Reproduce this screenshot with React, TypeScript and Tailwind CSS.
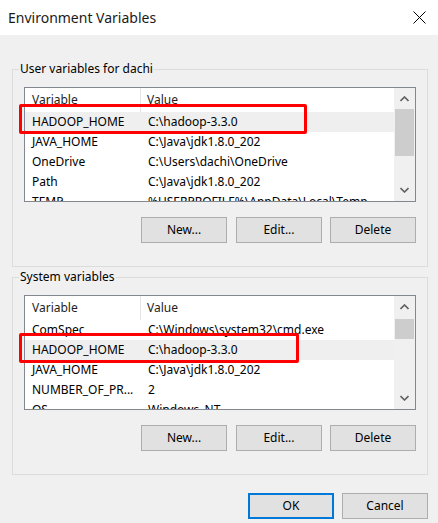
import React from "react";

const font = { fontFamily: '"Noto Sans", "Open Sans", sans-serif' };

type Row = { name: string; value: string; hl?: boolean };

function Chevron({ up }: { up?: boolean }) {
  return (
    <svg width="9" height="6" viewBox="0 0 9 6" className="block">
      {up ? (
        <polyline points="0.5,5 4.5,1 8.5,5" fill="none" stroke="#606060" strokeWidth="1.6" />
      ) : (
        <polyline points="0.5,1 4.5,5 8.5,1" fill="none" stroke="#606060" strokeWidth="1.6" />
      )}
    </svg>
  );
}

function ListBox({ rows, thumbTop, thumbH }: { rows: Row[]; thumbTop: number; thumbH: number }) {
  return (
    <div className="ml-[11px] w-[392px] h-[115px] border border-[#828790] bg-white flex overflow-hidden">
      <div className="flex-1 flex flex-col overflow-hidden">
        <div className="h-[24px] shrink-0 flex items-center text-[12px] text-[#1e1e1e]">
          <div className="w-[116px] h-full pl-[7px] flex items-center border-r border-[#e5e5e5]">Variable</div>
          <div className="pl-[6px]">Value</div>
        </div>
        {rows.map((r) => (
          <div
            key={r.name}
            className={`h-[20px] shrink-0 flex items-center text-[12px] text-black whitespace-nowrap ${r.hl ? "bg-[#efefef]" : ""}`}
          >
            <div className="w-[117px] pl-[7px]">{r.name}</div>
            <div className="pl-[6px]">{r.value}</div>
          </div>
        ))}
      </div>
      <div className="w-[21px] h-full bg-[#f0f0f0] flex flex-col items-center">
        <div className="h-[21px] w-full flex items-center justify-center">
          <Chevron up />
        </div>
        <div className="w-[19px] bg-[#cdcdcd]" style={{ marginTop: thumbTop, height: thumbH }} />
        <div className="flex-1" />
        <div className="h-[22px] w-full flex items-center justify-center">
          <Chevron />
        </div>
      </div>
    </div>
  );
}

function Btn({ children, primary }: { children: React.ReactNode; primary?: boolean }) {
  return (
    <div
      className={`w-[86px] h-[26px] flex items-center justify-center text-[12px] text-black bg-[#e1e1e1] ${
        primary ? "border-2 border-[#0078d7]" : "border border-[#adadad]"
      }`}
    >
      {children}
    </div>
  );
}

function Group({ label, rows, thumbTop, thumbH, className }: { label: string; rows: Row[]; thumbTop: number; thumbH: number; className: string }) {
  return (
    <div className={`ml-[12px] w-[416px] h-[198px] border border-[#dcdcdc] flex flex-col ${className}`}>
      <div className="-mt-[9px] ml-[6px] px-[1px] w-fit h-[16px] leading-[16px] bg-[#f0f0f0] text-[12px] text-black">
        {label}
      </div>
      <div className="mt-[10px]">
        <ListBox rows={rows} thumbTop={thumbTop} thumbH={thumbH} />
      </div>
      <div className="mt-[15px] mr-[11px] flex justify-end gap-[8px]">
        <div className="mr-[1px]">
          <Btn>New...</Btn>
        </div>
        <Btn>Edit...</Btn>
        <Btn>Delete</Btn>
      </div>
    </div>
  );
}

export default function App() {
  const userRows: Row[] = [
    { name: "HADOOP_HOME", value: "C:\\hadoop-3.3.0", hl: true },
    { name: "JAVA_HOME", value: "C:\\Java\\jdk1.8.0_202" },
    { name: "OneDrive", value: "C:\\Users\\dachi\\OneDrive" },
    { name: "Path", value: "C:\\Java\\jdk1.8.0_202" },
    { name: "TEMP", value: "%USERPROFILE%\\AppData\\Local\\Temp" },
  ];
  const sysRows: Row[] = [
    { name: "ComSpec", value: "C:\\Windows\\system32\\cmd.exe" },
    { name: "HADOOP_HOME", value: "C:\\hadoop-3.3.0", hl: true },
    { name: "JAVA_HOME", value: "C:\\Java\\jdk1.8.0_202" },
    { name: "NUMBER_OF_PR...", value: "2" },
    { name: "OS", value: "Windows_NT" },
  ];
  return (
    <div className="relative w-[438px] h-[523px] bg-[#f0f0f0] flex flex-col overflow-hidden" style={font}>
      <div className="h-[35px] shrink-0 bg-white flex items-center justify-between pl-[8px] pr-[12px]">
        <span className="text-[14px] text-[#1a1a1a]">Environment Variables</span>
        <svg width="13" height="13" viewBox="0 0 13 13" className="mb-[1px]">
          <line x1="0.5" y1="0.5" x2="12.5" y2="12.5" stroke="#000" strokeWidth="1" />
          <line x1="12.5" y1="0.5" x2="0.5" y2="12.5" stroke="#000" strokeWidth="1" />
        </svg>
      </div>
      <Group label="User variables for dachi" rows={userRows} thumbTop={0} thumbH={47} className="mt-[34px]" />
      <Group label="System variables" rows={sysRows} thumbTop={2} thumbH={20} className="mt-[10px]" />
      <div className="mt-[18px] mr-[10px] flex justify-end gap-[8px]">
        <Btn primary>OK</Btn>
        <Btn>Cancel</Btn>
      </div>
      <div className="absolute left-[19px] top-[104px] w-[288px] h-[30px] border-[3px] border-[#ff0000] rounded-[2px]" />
      <div className="absolute left-[19px] top-[333px] w-[280px] h-[30px] border-[3px] border-[#ff0000] rounded-[2px]" />
    </div>
  );
}
